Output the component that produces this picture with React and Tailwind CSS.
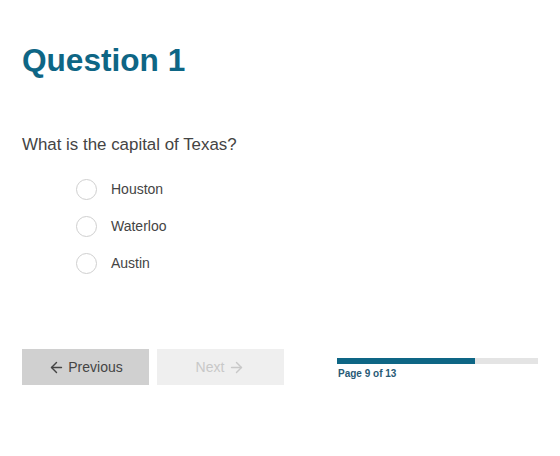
import { ArrowLeft, ArrowRight } from 'lucide-react'

const CHOICES = ['Houston', 'Waterloo', 'Austin']

export default function App() {
  return (
    <div className="w-[560px] h-[456px] bg-white font-['Liberation_Sans',Arial,sans-serif]">
      <div className="pl-[22px] pr-[22px] pt-[39px]">
        {/* Title */}
        <h1 className="text-[31.6px] leading-[42px] font-bold text-[#0e6685]">Question 1</h1>

        {/* Question */}
        <p className="mt-[53px] text-[16.9px] leading-[22px] text-[#444]">What is the capital of Texas?</p>

        <div className="mt-[15px] pl-[54px] flex flex-col">
          {CHOICES.map((c) => (
            <label key={c} className="flex items-center h-[37px]">
              <span className="w-[21px] h-[21px] rounded-full border border-[#cfcfcf] bg-white" />
              <span className="ml-[14px] text-[14px] text-[#444]">{c}</span>
            </label>
          ))}
        </div>

        {/* Footer */}
        <div className="mt-[67px] flex items-start">
          <button className="w-[127px] h-[36px] bg-[#d0d0d0] text-[#444] text-[14px] flex items-center justify-center gap-[3px]">
            <ArrowLeft size={17} strokeWidth={2} />
            Previous
          </button>
          <button className="ml-[8px] w-[127px] h-[36px] bg-[#efefef] text-[#c8c8c8] text-[14px] flex items-center justify-center gap-[4px]">
            Next
            <ArrowRight size={17} strokeWidth={2} />
          </button>

          <div className="ml-[53px] pt-[9px] w-[201px]">
            <div className="h-[6px] bg-[#e4e4e4]">
              <div className="h-full w-[138px] bg-[#0e6685]" />
            </div>
            <div className="mt-[4px] text-[10px] leading-[12px] font-bold text-[#285a75] pl-[1px]">Page 9 of 13</div>
          </div>
        </div>
      </div>
    </div>
  )
}
